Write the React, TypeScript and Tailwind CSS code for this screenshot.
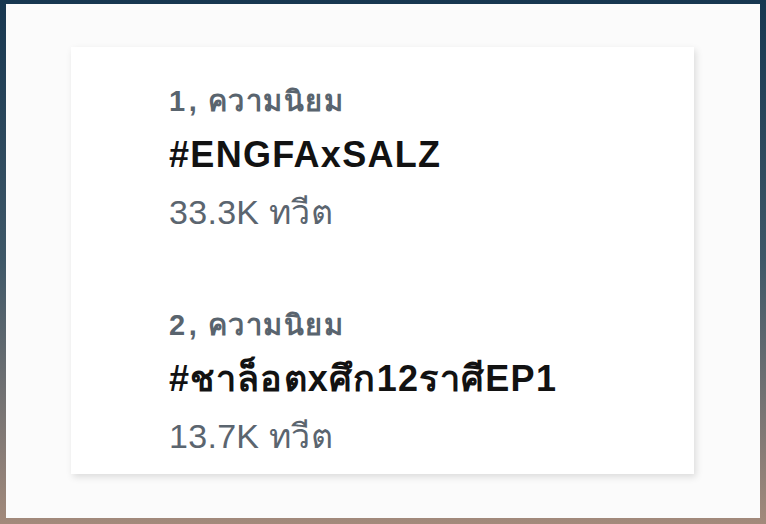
const trends = [
  { rank: "1", tag: "#ENGFAxSALZ", count: "33.3K ทวีต" },
  { rank: "2", tag: "#ชาล็อตxศึก12ราศีEP1", count: "13.7K ทวีต" },
];

export default function App() {
  return (
    <div className="w-[766px] h-[524px] pt-[4px] px-[6px] pb-[6px] bg-linear-to-b from-[#173750] via-[#3f5868] to-[#a38a7b] font-['Liberation_Sans',Arial,sans-serif]">
      <div className="w-full h-full bg-[#fbfbfb] pl-[65px] pt-[43px]">
        <div className="w-[623px] h-[427px] bg-white shadow-[2px_3px_7px_rgba(0,0,0,0.13)] pl-[98px] pt-[36px]">
          {trends.map((t, i) => (
            <div key={t.rank} className={i > 0 ? "mt-[75px]" : ""}>
              <p className="text-[29px] leading-[36px] font-bold text-[#59646e] tracking-[1.5px]">
                {t.rank}
                <span className="ml-[2px]">,</span> ความนิยม
              </p>
              <p className="mt-[14px] text-[36px] leading-[44px] font-bold text-[#121212] tracking-[1.3px]">
                {t.tag}
              </p>
              <p className="mt-[15px] text-[34px] leading-[40px] text-[#5b656f] tracking-[0.3px]">{t.count}</p>
            </div>
          ))}
        </div>
      </div>
    </div>
  );
}
